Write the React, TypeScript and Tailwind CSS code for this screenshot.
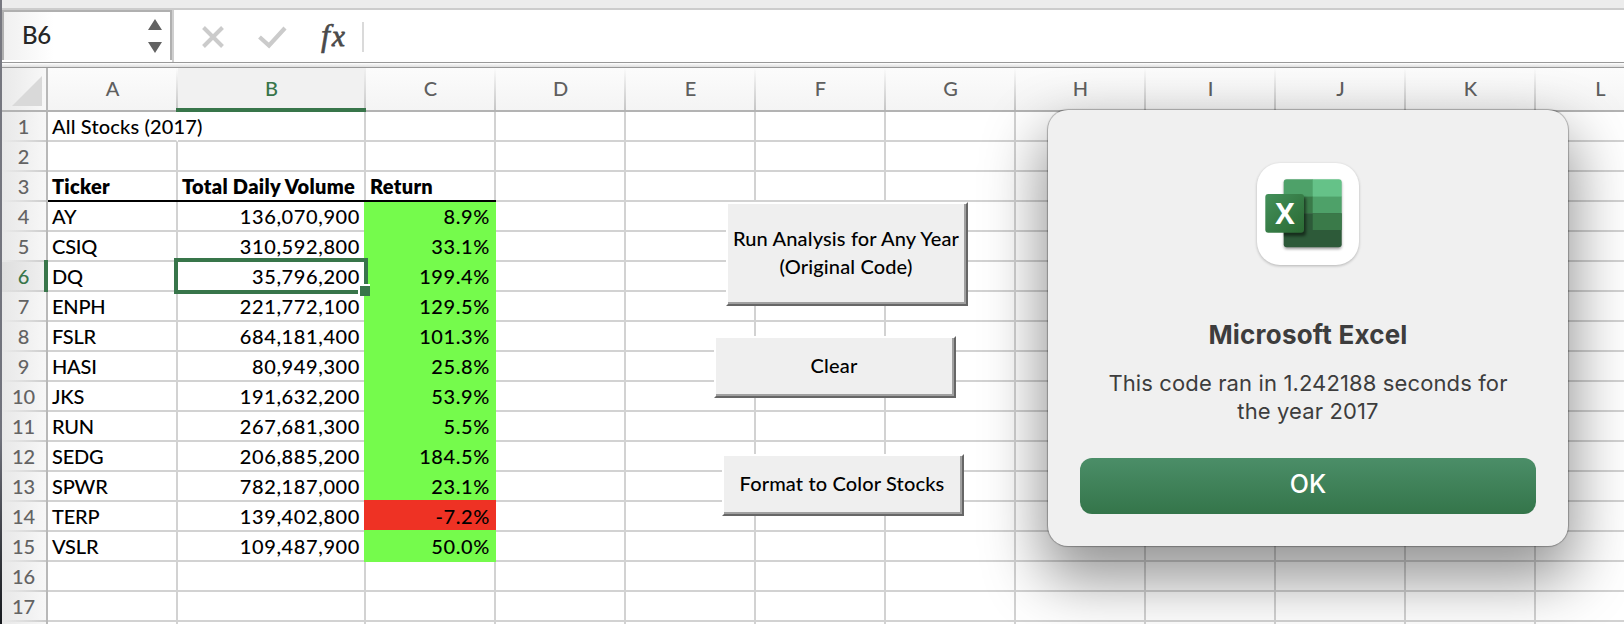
const COLUMNS = [
  { name: "A", width: "w-[130px]" },
  { name: "B", width: "w-[188px]" },
  { name: "C", width: "w-[130px]" },
  { name: "D", width: "w-[130px]" },
  { name: "E", width: "w-[130px]" },
  { name: "F", width: "w-[130px]" },
  { name: "G", width: "w-[130px]" },
  { name: "H", width: "w-[130px]" },
  { name: "I", width: "w-[130px]" },
  { name: "J", width: "w-[130px]" },
  { name: "K", width: "w-[130px]" },
  { name: "L", width: "w-[130px]" },
];

const STOCKS: [string, string, string][] = [
  ["AY", "136,070,900", "8.9%"],
  ["CSIQ", "310,592,800", "33.1%"],
  ["DQ", "35,796,200", "199.4%"],
  ["ENPH", "221,772,100", "129.5%"],
  ["FSLR", "684,181,400", "101.3%"],
  ["HASI", "80,949,300", "25.8%"],
  ["JKS", "191,632,200", "53.9%"],
  ["RUN", "267,681,300", "5.5%"],
  ["SEDG", "206,885,200", "184.5%"],
  ["SPWR", "782,187,000", "23.1%"],
  ["TERP", "139,402,800", "-7.2%"],
  ["VSLR", "109,487,900", "50.0%"],
];

function FormulaBar() {
  return (
    <div className="flex h-[55px] shrink-0 items-start border-t-2 border-b border-t-[#cccccc] border-b-[#999999] bg-white">
      <div className="flex h-[50px] w-[170px] items-center justify-between border-x-2 border-t-2 border-[#b0b0b0] bg-linear-to-r from-[#f0f0f0] to-white to-30% pr-[8px] pl-[18px]">
        <span className="pb-[2px] text-[24px] font-medium tracking-[-0.4px] text-[#262626]">B6</span>
        <svg width="14" height="34" viewBox="0 0 14 34" fill="#636363">
          <path d="M7 0L14 11H0zM7 34L0 23h14z" />
        </svg>
      </div>
      <svg width="200" height="52" viewBox="0 0 200 52" fill="none">
        <path d="M1 0V52" stroke="#cfcfcf" strokeWidth="2" />
        <path d="M31.5 17.5L50.5 36.5M50.5 17.5L31.5 36.5" stroke="#cbcbcb" strokeWidth="4" />
        <path d="M87.5 27L97 35.5L113 18" stroke="#cbcbcb" strokeWidth="4.2" />
        <text x="149" y="35.5" fill="#4a4a4a" stroke="#4a4a4a" strokeWidth="0.6" fontFamily="Liberation Serif, serif" fontStyle="italic" fontSize="32">f</text>
        <text x="160" y="35.5" fill="#4a4a4a" stroke="#4a4a4a" strokeWidth="0.8" fontFamily="Liberation Serif, serif" fontStyle="italic" fontSize="29">x</text>
        <path d="M191 12V42" stroke="#dadada" strokeWidth="2" />
      </svg>
    </div>
  );
}

function ColumnHeaders() {
  return (
    <div className="flex h-[44px] w-[1800px] shrink-0">
      <div className="flex w-[46px] items-end justify-end border-r-2 border-b-2 border-r-[#b8b8b8] border-b-[#b3b3b3] bg-linear-to-r from-[#e9e9e9] to-[#f8f8f8] pr-1 pb-1">
        <svg width="30" height="30" viewBox="0 0 30 30" fill="#d9d9d9">
          <path d="M30 0V30H0z" />
        </svg>
      </div>
      {COLUMNS.map((c) => {
        const active = c.name === "B";
        return (
          <div
            key={c.name}
            className={`relative flex items-start justify-center pt-[6px] text-[20px] leading-[28px] font-medium ${c.width} ${
              active
                ? "bg-[#f1f1f1] text-[#38754a]"
                : "border-b-2 border-[#b3b3b3] bg-linear-to-b from-[#fcfcfc] to-[#f4f4f4] text-[#5f5f5f]"
            }`}
          >
            <span className="pr-[1px]">{c.name}</span>
            <span className="absolute top-0 right-0 bottom-0 w-[2px] bg-linear-to-b from-transparent to-[#c6c6c6]" />
            {active && <span className="absolute right-0 bottom-0 -left-[2px] h-1 bg-[#38754a]" />}
          </div>
        );
      })}
    </div>
  );
}

function ReturnCell({ row, value }: { row: number; value: string }) {
  const size = row === 4 ? "h-[30px]" : "-mt-[2px] h-[32px] pt-[2px]";
  return (
    <span
      className={`relative -mr-[2px] -ml-[2px] flex w-[132px] shrink-0 items-start justify-end pr-[6px] tracking-[0.6px] ${size} ${
        row === 14 ? "bg-[#ee3224]" : "bg-[#75fb4c]"
      }`}
    >
      {value}
    </span>
  );
}

function Cell({ row, col, width }: { row: number; col: number; width: string }) {
  const stock = STOCKS[row - 4];
  const heading = row === 3 && col < 3;
  const border = row === 1 && col === 0 ? "border-r-transparent" : "border-r-[#d2d2d2]";
  let content = null;
  if (row === 1 && col === 0) content = <span className="pl-1 tracking-[0.15px]">All Stocks (2017)</span>;
  if (heading)
    content = (
      <span className="pl-1 font-extrabold tracking-[0.3px]">{["Ticker", "Total Daily Volume", "Return"][col]}</span>
    );
  if (stock && col === 0) content = <span className="pl-1 tracking-[-0.2px]">{stock[0]}</span>;
  if (stock && col === 1) content = <span className="ml-auto pr-[4px] tracking-[0.6px]">{stock[1]}</span>;
  if (stock && col === 2) content = <ReturnCell row={row} value={stock[2]} />;
  return (
    <div
      className={`relative flex h-[30px] shrink-0 items-start border-r-2 border-b-2 border-b-[#d2d2d2] leading-[28px] whitespace-nowrap ${width} ${border}`}
    >
      {content}
      {heading && <span className="absolute -right-[2px] -bottom-[2px] left-0 h-[2px] bg-black" />}
    </div>
  );
}

function Row({ row }: { row: number }) {
  const active = row === 6;
  return (
    <div className="flex h-[30px] w-[1800px] shrink-0">
      <div
        className={`relative flex w-[46px] items-start justify-center border-r-2 border-[#b8b8b8] bg-linear-to-r pr-[1px] leading-[28px] ${
          active ? "from-[#dedede] to-[#f0f0f0] text-[#38754a]" : "from-[#e8e8e8] to-[#f7f7f7] text-[#636363]"
        }`}
      >
        {row <= 17 && row}
        <span className="absolute right-0 bottom-0 left-0 h-[2px] bg-linear-to-r from-transparent to-[#cbcbcb]" />
        {active && <span className="absolute -top-[2px] -right-[2px] bottom-0 w-1 bg-[#38754a]" />}
      </div>
      {COLUMNS.map((c, i) => (
        <Cell key={c.name} row={row} col={i} width={c.width} />
      ))}
    </div>
  );
}

function MacroButton({ className, children }: { className: string; children: React.ReactNode }) {
  return (
    <button
      className={`absolute flex w-[242px] border-2 border-t-white border-r-[#666666] border-b-[#666666] border-l-white text-[20px] leading-[28px] whitespace-nowrap ${className}`}
    >
      <span className="flex h-full w-full items-center justify-center border-r-2 border-b-2 border-[#a0a0a0] bg-[#efefef] pb-[2px] tracking-[0.15px]">
        {children}
      </span>
    </button>
  );
}

function ExcelIcon() {
  return (
    <svg width="120" height="120" viewBox="0 0 120 120">
      <defs>
        <linearGradient id="tile" x1="0" y1="0" x2="1" y2="1">
          <stop offset="0" stopColor="#43905a" />
          <stop offset="1" stopColor="#2b6a33" />
        </linearGradient>
        <clipPath id="sheet">
          <rect x="35.7" y="25.3" width="58" height="68" rx="3" />
        </clipPath>
        <filter id="soft" x="-30%" y="-30%" width="160%" height="160%">
          <feGaussianBlur stdDeviation="1.6" />
        </filter>
      </defs>
      <rect x="9" y="10" width="102" height="102" rx="23" fill="#000" opacity="0.25" filter="url(#soft)" />
      <rect x="9" y="9" width="102" height="102" rx="23" fill="#fff" />
      <rect x="36" y="27" width="57.5" height="68" rx="3" fill="#000" opacity="0.4" filter="url(#soft)" />
      <g clipPath="url(#sheet)">
        <rect x="35" y="25" width="30" height="18" fill="#4ea169" />
        <rect x="64.7" y="25" width="30" height="18" fill="#65c288" />
        <rect x="35" y="42.6" width="30" height="17" fill="#3a7a49" />
        <rect x="64.7" y="42.6" width="30" height="17" fill="#4ea169" />
        <rect x="35" y="59.3" width="60" height="35" fill="#2d5a39" />
        <rect x="64.7" y="59.3" width="30" height="16.7" fill="#3a7a49" />
        <rect x="19" y="43" width="39" height="39" rx="3" fill="#000" opacity="0.5" filter="url(#soft)" />
      </g>
      <rect x="17.3" y="40" width="38.7" height="38.7" rx="3" fill="url(#tile)" />
      <text x="36.8" y="69.8" textAnchor="middle" fontFamily="Open Sans, sans-serif" fontWeight="700" fontSize="29" fill="#fff">
        X
      </text>
    </svg>
  );
}

function Alert() {
  return (
    <div className="absolute top-[110px] left-[1048px] flex h-[436px] w-[520px] flex-col items-center rounded-[20px] bg-[#f0f0f0] px-8 pt-[44px] pb-8 font-[Inter,sans-serif] font-normal text-[#3d3d3d] shadow-[0_0_1px_1px_rgba(0,0,0,0.28),0_28px_60px_6px_rgba(0,0,0,0.42)]">
      <ExcelIcon />
      <h1 className="mt-[45px] text-[26px] leading-[32px] font-bold tracking-[0.2px] whitespace-nowrap">
        Microsoft Excel
      </h1>
      <p className="mt-[18px] text-center text-[22px] leading-[28px] tracking-[0.12px] whitespace-nowrap">
        This code ran in 1.242188 seconds for
        <br />
        the year 2017
      </p>
      <button className="mt-auto h-[56px] w-full rounded-[12px] bg-linear-to-b from-[#4b8e68] to-[#34754a] pb-[2px] text-[25px] font-medium text-white">
        OK
      </button>
    </div>
  );
}

export default function App() {
  return (
    <div className="relative flex h-[624px] w-[1624px] overflow-hidden bg-white font-[Lato,sans-serif] text-[20px] font-medium text-black">
      <div className="w-[2px] shrink-0 bg-linear-to-b from-[#777880] via-[#70727c] via-70% to-[#16191d]" />
      <div className="flex h-[624px] w-[1622px] shrink-0 flex-col overflow-hidden">
        <div className="h-2 shrink-0 bg-[#ececec]" />
        <FormulaBar />
        <div className="h-[5px] shrink-0 border-b border-[#999999] bg-linear-to-b from-white to-[#dddddd]" />
        <ColumnHeaders />
        {Array.from({ length: 18 }, (_, i) => (
          <Row key={i} row={i + 1} />
        ))}
      </div>

      <div className="absolute top-[258px] left-[174px] h-[36px] w-[194px] border-4 border-[#38754a]" />
      <div className="absolute top-[284px] left-[358px] h-[12px] w-[12px] border-t-2 border-l-2 border-white bg-[#38754a]" />

      <MacroButton className="top-[202px] left-[726px] h-[104px]">
        <span>
          Run Analysis for Any Year
          <br />
          (Original Code)
        </span>
      </MacroButton>
      <MacroButton className="top-[336px] left-[714px] h-[62px]">Clear</MacroButton>
      <MacroButton className="top-[454px] left-[722px] h-[62px]">Format to Color Stocks</MacroButton>

      <Alert />
    </div>
  );
}
